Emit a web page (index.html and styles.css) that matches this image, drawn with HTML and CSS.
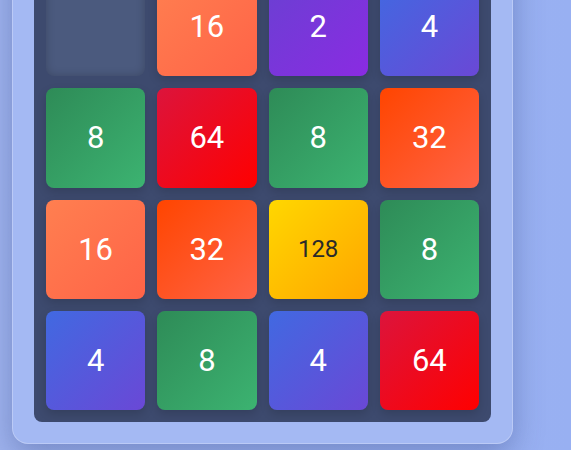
FILE: index.html
```html
<!DOCTYPE html>
<html lang="en">
<head>
  <meta charset="UTF-8" />
  <meta name="viewport" content="width=device-width, initial-scale=1" />
  <title>2048</title>
  <link rel="stylesheet" href="styles.css">
</head>
<body>

  <div class="game">
    <div class="board">
      <div class="tile empty"></div>
      <div class="tile t16">16</div>
      <div class="tile t2">2</div>
      <div class="tile t4">4</div>

      <div class="tile t8">8</div>
      <div class="tile t64">64</div>
      <div class="tile t8">8</div>
      <div class="tile t32">32</div>

      <div class="tile t16">16</div>
      <div class="tile t32">32</div>
      <div class="tile t128">128</div>
      <div class="tile t8">8</div>

      <div class="tile t4">4</div>
      <div class="tile t8">8</div>
      <div class="tile t4">4</div>
      <div class="tile t64">64</div>
    </div>
  </div>

</body>
</html>
```

FILE: styles.css
```css
body {
  margin: 0;
  height: 450px;
  overflow: hidden;
  font-family: Roboto, "Liberation Sans", sans-serif;
  background: linear-gradient(90deg, #9fb3ee, #98b0f2);
}
.game {
  width: 501px;
  box-sizing: border-box;
  margin: -57px 0 0 12px;
  padding: 21px;
  background: #a4b9f3;
  border: 1px solid rgba(255, 255, 255, 0.25);
  border-radius: 16px;
  box-shadow: 0 10px 30px rgba(40, 60, 120, 0.35);
}
.board {
  display: grid;
  grid-template-columns: repeat(4, 1fr);
  gap: 12px;
  padding: 12px;
  background: #3d4a6e;
  border-radius: 8px;
}
.tile {
  aspect-ratio: 1;
  display: flex;
  align-items: center;
  justify-content: center;
  border-radius: 8px;
  color: #fff;
  font-size: 31px;
  box-shadow: 0 4px 10px rgba(0, 0, 0, 0.15);
}
.empty {
  background: #4b5a7e;
  box-shadow: inset 0 0 10px rgba(0, 0, 0, 0.2);
}
.t2   { background: linear-gradient(135deg, #6a40d2, #8a2be2); }
.t4   { background: linear-gradient(135deg, #4169e1, #6a48d6); }
.t8   { background: linear-gradient(135deg, #2e8b57, #3cb371); }
.t16  { background: linear-gradient(135deg, #ff7f50, #ff6347); }
.t32  { background: linear-gradient(135deg, #ff4500, #ff6347); }
.t64  { background: linear-gradient(135deg, #dc143c, #ff0000); }
.t128 {
  background: linear-gradient(135deg, #ffd700, #ffa500);
  color: #2a2a2a;
  font-size: 24px;
}
```
